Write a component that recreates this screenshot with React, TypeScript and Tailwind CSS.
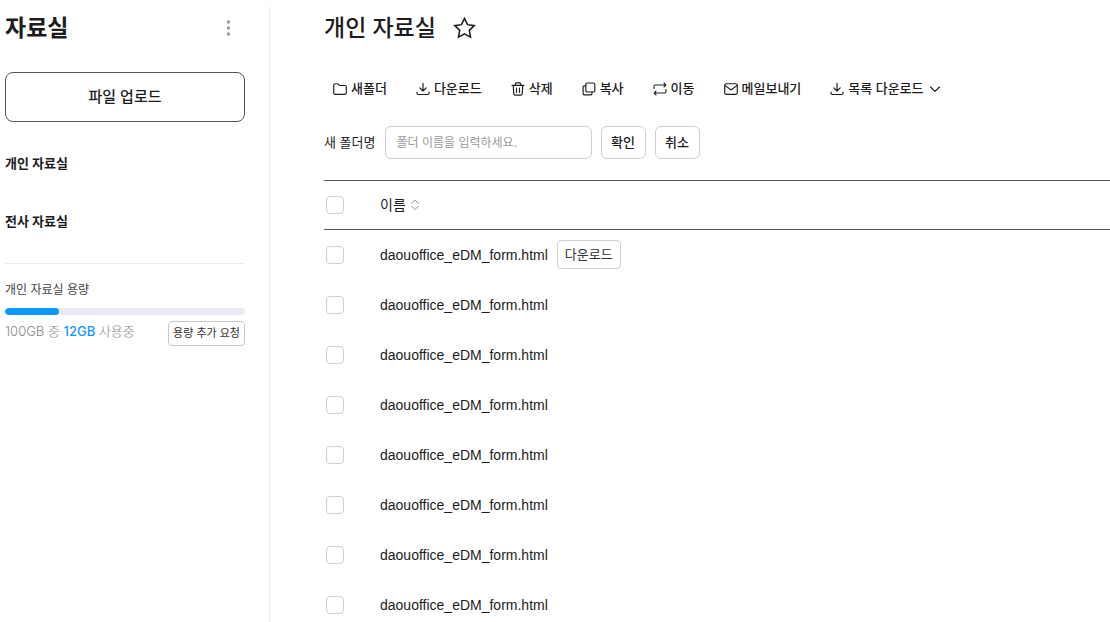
import { useState } from "react";
import type { ReactNode } from "react";

const Icon = ({ children }: { children: ReactNode }) => (
  <svg
    className="size-[14px] shrink-0"
    viewBox="0 0 14 14"
    fill="none"
    stroke="currentColor"
    strokeWidth="1.15"
    strokeLinecap="round"
    strokeLinejoin="round"
    aria-hidden="true"
  >
    {children}
  </svg>
);

const FolderIcon = () => (
  <Icon>
    <path d="M.7 3.2c0-.9.6-1.5 1.5-1.5h2.3c.4 0 .7.2.9.5l.7 1c.2.2.4.3.7.3h5c.9 0 1.5.6 1.5 1.5v5.8c0 .9-.6 1.5-1.5 1.5H2.2c-.9 0-1.5-.6-1.5-1.5z" />
  </Icon>
);

const DownloadIcon = () => (
  <Icon>
    <path d="M7 1.2v7.6M3.8 5.8 7 9l3.2-3.2M1 10v1.3c0 .7.5 1.2 1.2 1.2h9.6c.7 0 1.2-.5 1.2-1.2V10" />
  </Icon>
);

const TrashIcon = () => (
  <Icon>
    <path d="M1 3.3h12M4.3 3.3V1.900c0-.6.4-1 1-1h3.400c.6 0 1 .4 1 1v1.400M2.200 3.300l.6 8.600c.1.7.6 1.200 1.300 1.200h5.800c.7 0 1.200-.5 1.300-1.200l.6-8.600M5.500 6v4.300M8.500 6v4.300" />
  </Icon>
);

const CopyIcon = () => (
  <Icon>
    <rect x="3.8" y="1" width="9" height="9" rx="1.4" />
    <path d="M3.8 3.8H2.500C1.700 3.800 1.100 4.400 1.100 5.200v6.200c0 .8.6 1.400 1.400 1.400h6.100c.8 0 1.400-.6 1.400-1.400V10" />
  </Icon>
);

const MoveIcon = () => (
  <Icon>
    <path d="M1 6.500V4.500c0-.9.6-1.500 1.500-1.500h10.300M11 1.200 12.800 3 11 4.800M13 7.500v2c0 .9-.6 1.500-1.500 1.500H1.200M3 9.200 1.200 11 3 12.800" />
  </Icon>
);

const MailIcon = () => (
  <Icon>
    <rect x=".7" y="1.7" width="12.6" height="10.6" rx="1.5" />
    <path d="m1.2 3.600 4.900 3.700c.5.4 1.300.4 1.800 0l4.900-3.700" />
  </Icon>
);

const tools = [
  { label: "새폴더", icon: <FolderIcon /> },
  { label: "다운로드", icon: <DownloadIcon /> },
  { label: "삭제", icon: <TrashIcon /> },
  { label: "복사", icon: <CopyIcon /> },
  { label: "이동", icon: <MoveIcon /> },
  { label: "메일보내기", icon: <MailIcon /> },
];

const files = Array.from({ length: 8 }, (_, i) => ({
  id: i,
  name: "daouoffice_eDM_form.html",
  downloadable: i === 0,
}));

const usage = { total: 100, used: 12, bar: 22.5 };

type CheckboxProps = {
  label: string;
  checked: boolean;
  onChange: () => void;
};

const Checkbox = ({ label, checked, onChange }: CheckboxProps) => (
  <input
    type="checkbox"
    aria-label={label}
    checked={checked}
    onChange={onChange}
    className="block size-[18px] appearance-none rounded border border-[#cfcfcf] bg-white checked:border-[#1098ff] checked:bg-[#1098ff]"
  />
);

const Sidebar = () => (
  <aside className="mt-1.5 w-[270px] shrink-0 border-r border-[#ebebeb] pr-6 pl-[5px]">
    <div className="flex h-11 items-center justify-between">
      <h1 className="text-[23px] leading-8 font-bold">자료실</h1>
      <button type="button" aria-label="더보기" className="mr-2 p-1 text-[#999]">
        <svg className="h-4 w-[9px]" viewBox="0 0 9 16" fill="currentColor">
          <circle cx="4.5" cy="2" r="1.7" />
          <circle cx="4.5" cy="8" r="1.7" />
          <circle cx="4.5" cy="14" r="1.7" />
        </svg>
      </button>
    </div>

    <button
      type="button"
      className="mt-[22px] h-[50px] w-full rounded-lg border border-[#555] text-[15px] font-medium"
    >
      파일 업로드
    </button>

    <nav className="mt-[31px] flex flex-col gap-[38px] text-[13px] leading-5 font-bold">
      <a href="#personal">개인 자료실</a>
      <a href="#company">전사 자료실</a>
    </nav>

    <section className="mt-8 border-t border-[#ebebeb] pt-4">
      <h2 className="text-xs leading-5 text-[#444]">개인 자료실 용량</h2>
      <div className="mt-2 h-[7px] overflow-hidden rounded-full bg-[#ebecf1]">
        <div
          className="h-full rounded-full bg-[#1098ff]"
          style={{ width: `${usage.bar}%` }}
        />
      </div>
      <div className="mt-1.5 flex items-start justify-between">
        <p className="text-[13px] leading-5 font-light text-[#888]">
          {usage.total}GB 중{" "}
          <strong className="font-medium text-[#1098ff]">{usage.used}GB</strong>{" "}
          사용중
        </p>
        <button
          type="button"
          className="h-[25px] rounded border border-[#c8c8c8] px-1 text-[11px] text-[#333]"
        >
          용량 추가 요청
        </button>
      </div>
    </section>
  </aside>
);

function App() {
  const [folderName, setFolderName] = useState("");
  const [selected, setSelected] = useState<number[]>([]);

  const toggle = (id: number) => {
    setSelected((prev) =>
      prev.includes(id) ? prev.filter((v) => v !== id) : [...prev, id],
    );
  };

  const allSelected = selected.length === files.length;

  return (
    <div className="flex min-h-screen bg-white font-['Inter','Noto_Sans_CJK_KR',sans-serif] text-[#1c1c1c]">
      <Sidebar />

      <main className="min-w-0 flex-1 pt-1.5 pl-[54px]">
        <header className="flex h-11 items-center gap-[17px]">
          <h2 className="text-[23px] leading-8 font-medium">개인 자료실</h2>
          <button type="button" aria-label="즐겨찾기">
            <svg
              className="size-[23px]"
              viewBox="0 0 24 24"
              fill="none"
              stroke="currentColor"
              strokeWidth="1.6"
              strokeLinejoin="miter"
            >
              <path d="m12 1.500 3.100 6.500 7.100 1-5.200 4.900 1.300 7.100L12 17.600 5.700 21 7 13.900 1.800 9l7.100-1z" />
            </svg>
          </button>
        </header>

        <div className="mt-[29px] flex h-5 items-center gap-[29px] pl-[9px] text-[13px] font-medium whitespace-nowrap">
          {tools.map(({ label, icon }) => (
            <button key={label} type="button" className="flex items-center gap-1">
              {icon}
              {label}
            </button>
          ))}
          <button type="button" className="flex items-center gap-1">
            <DownloadIcon />
            목록 다운로드
            <Icon>
              <path d="M2.500 5 7 9.300 11.500 5" />
            </Icon>
          </button>
        </div>

        <form
          className="mt-[27px] flex items-center text-[13px]"
          onSubmit={(e) => e.preventDefault()}
        >
          <label htmlFor="folder-name">새 폴더명</label>
          <input
            id="folder-name"
            type="text"
            value={folderName}
            onChange={(e) => setFolderName(e.target.value)}
            placeholder="폴더 이름을 입력하세요."
            className="ml-[9px] h-[33px] w-[207px] rounded-md border border-[#cfcfcf] px-[11px] text-xs outline-none placeholder:text-[#999]"
          />
          <button
            type="submit"
            className="ml-[9px] h-[33px] w-[45px] rounded-md border border-[#cfcfcf] font-medium"
          >
            확인
          </button>
          <button
            type="button"
            className="ml-[9px] h-[33px] w-[45px] rounded-md border border-[#cfcfcf] font-medium"
            onClick={() => setFolderName("")}
          >
            취소
          </button>
        </form>

        <table className="mt-[21px] w-full text-left text-sm">
          <thead>
            <tr className="h-[49px] border-y border-[#555]">
              <th className="w-14 pl-[2px]">
                <Checkbox
                  label="전체 선택"
                  checked={allSelected}
                  onChange={() =>
                    setSelected(allSelected ? [] : files.map((f) => f.id))
                  }
                />
              </th>
              <th className="font-normal">
                <button type="button" className="flex items-center gap-1">
                  이름
                  <svg
                    className="h-3 w-2.5 text-[#999]"
                    viewBox="0 0 10 12"
                    fill="none"
                    stroke="currentColor"
                    strokeLinecap="round"
                    strokeLinejoin="round"
                    aria-hidden="true"
                  >
                    <path d="M1.800 4.200 5 1l3.200 3.200M1.800 7.300 5 10.500l3.200-3.200" />
                  </svg>
                </button>
              </th>
            </tr>
          </thead>
          <tbody>
            {files.map((file) => (
              <tr key={file.id} className="h-[50px]">
                <td className="pl-[2px]">
                  <Checkbox
                    label={file.name}
                    checked={selected.includes(file.id)}
                    onChange={() => toggle(file.id)}
                  />
                </td>
                <td>
                  <div className="flex items-center gap-[9px]">
                    <a
                      href={`#file-${file.id}`}
                      className="font-['Liberation_Sans',sans-serif]"
                    >
                      {file.name}
                    </a>
                    {file.downloadable && (
                      <button
                        type="button"
                        className="h-[29px] rounded border border-[#cfcfcf] px-[7px] text-[13px] text-[#333]"
                      >
                        다운로드
                      </button>
                    )}
                  </div>
                </td>
              </tr>
            ))}
          </tbody>
        </table>
      </main>
    </div>
  );
}

export default App;
